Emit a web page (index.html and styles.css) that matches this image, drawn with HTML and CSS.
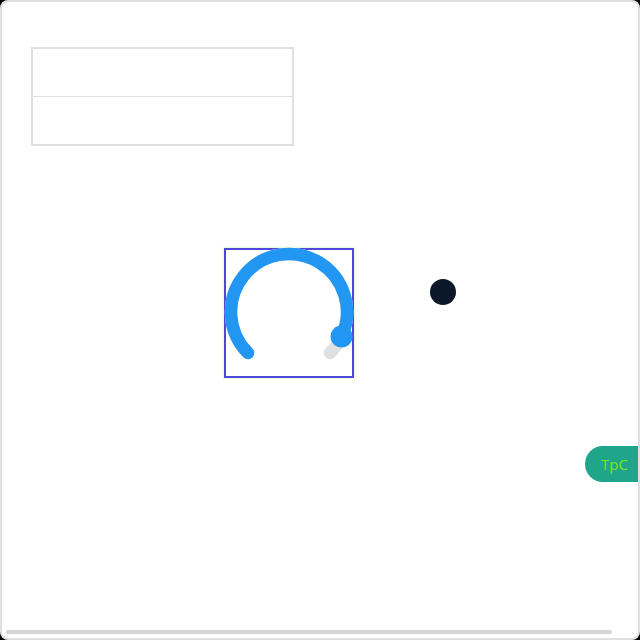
FILE: index.html
```html
<!DOCTYPE html>
<html lang="en">
<head>
<meta charset="utf-8">
<title>Knob</title>
<link rel="stylesheet" href="styles.css">
</head>
<body>
<div class="frame">
  <table class="grid">
    <tr><td></td></tr>
    <tr><td></td></tr>
  </table>
  <div class="stage">
    <div class="knob">
      <svg class="dial" width="130" height="130" viewBox="0 0 130 130">
        <path d="M23.99 105.01 A58 58 0 1 1 106.01 105.01" fill="none" stroke="#e0e0e0" stroke-width="12.5" stroke-linecap="round"/>
        <path d="M23.99 105.01 A58 58 0 1 1 117.57 88.51" fill="none" stroke="#2196f3" stroke-width="12.5" stroke-linecap="round"/>
        <circle cx="117.57" cy="88.51" r="11" fill="#2196f3"/>
      </svg>
    </div>
    <div class="dot"></div>
  </div>
  <div class="pill">TpC</div>
  <div class="scrollbar"></div>
</div>
</body>
</html>
```
FILE: styles.css
```css
html { background: #000; }
body { margin: 0; }
.frame {
  position: relative;
  box-sizing: border-box;
  width: 640px;
  height: 640px;
  background: #fff;
  border: 2px solid #e0e0e0;
  border-radius: 8px;
  overflow: hidden;
  padding: 45px 30px 0 29px;
}
.grid {
  border-collapse: separate;
  border-spacing: 0;
  width: 263px;
  border: 2px solid #e0e0e0;
}
.grid td {
  height: 47px;
  padding: 0;
}
.grid tr:first-child td { border-bottom: 1px solid #e0e0e0; }
.stage {
  display: flex;
  align-items: flex-start;
  margin-top: 102px;
  margin-left: 193px;
}
.knob {
  box-sizing: border-box;
  width: 130px;
  height: 130px;
  border: 2px solid #4f46dc;
  box-shadow: 0 0 2px 1px #e4f8d2;
}
.dial {
  display: block;
  margin: -2px;
  overflow: visible;
}
.dot {
  width: 26px;
  height: 26px;
  border-radius: 50%;
  background: #0b1829;
  margin-left: 76px;
  margin-top: 31px;
}
.pill {
  position: absolute;
  left: 583px;
  top: 444px;
  height: 36px;
  width: 80px;
  border-radius: 18px;
  background: #1fa589;
  color: #7be61c;
  font-family: "Open Sans", sans-serif;
  font-size: 15px;
  line-height: 36px;
  padding-left: 16px;
  box-sizing: border-box;
}
.scrollbar {
  position: absolute;
  left: 4px;
  top: 628px;
  width: 606px;
  height: 4px;
  border-radius: 2px;
  background: #d6d6d6;
}
```
